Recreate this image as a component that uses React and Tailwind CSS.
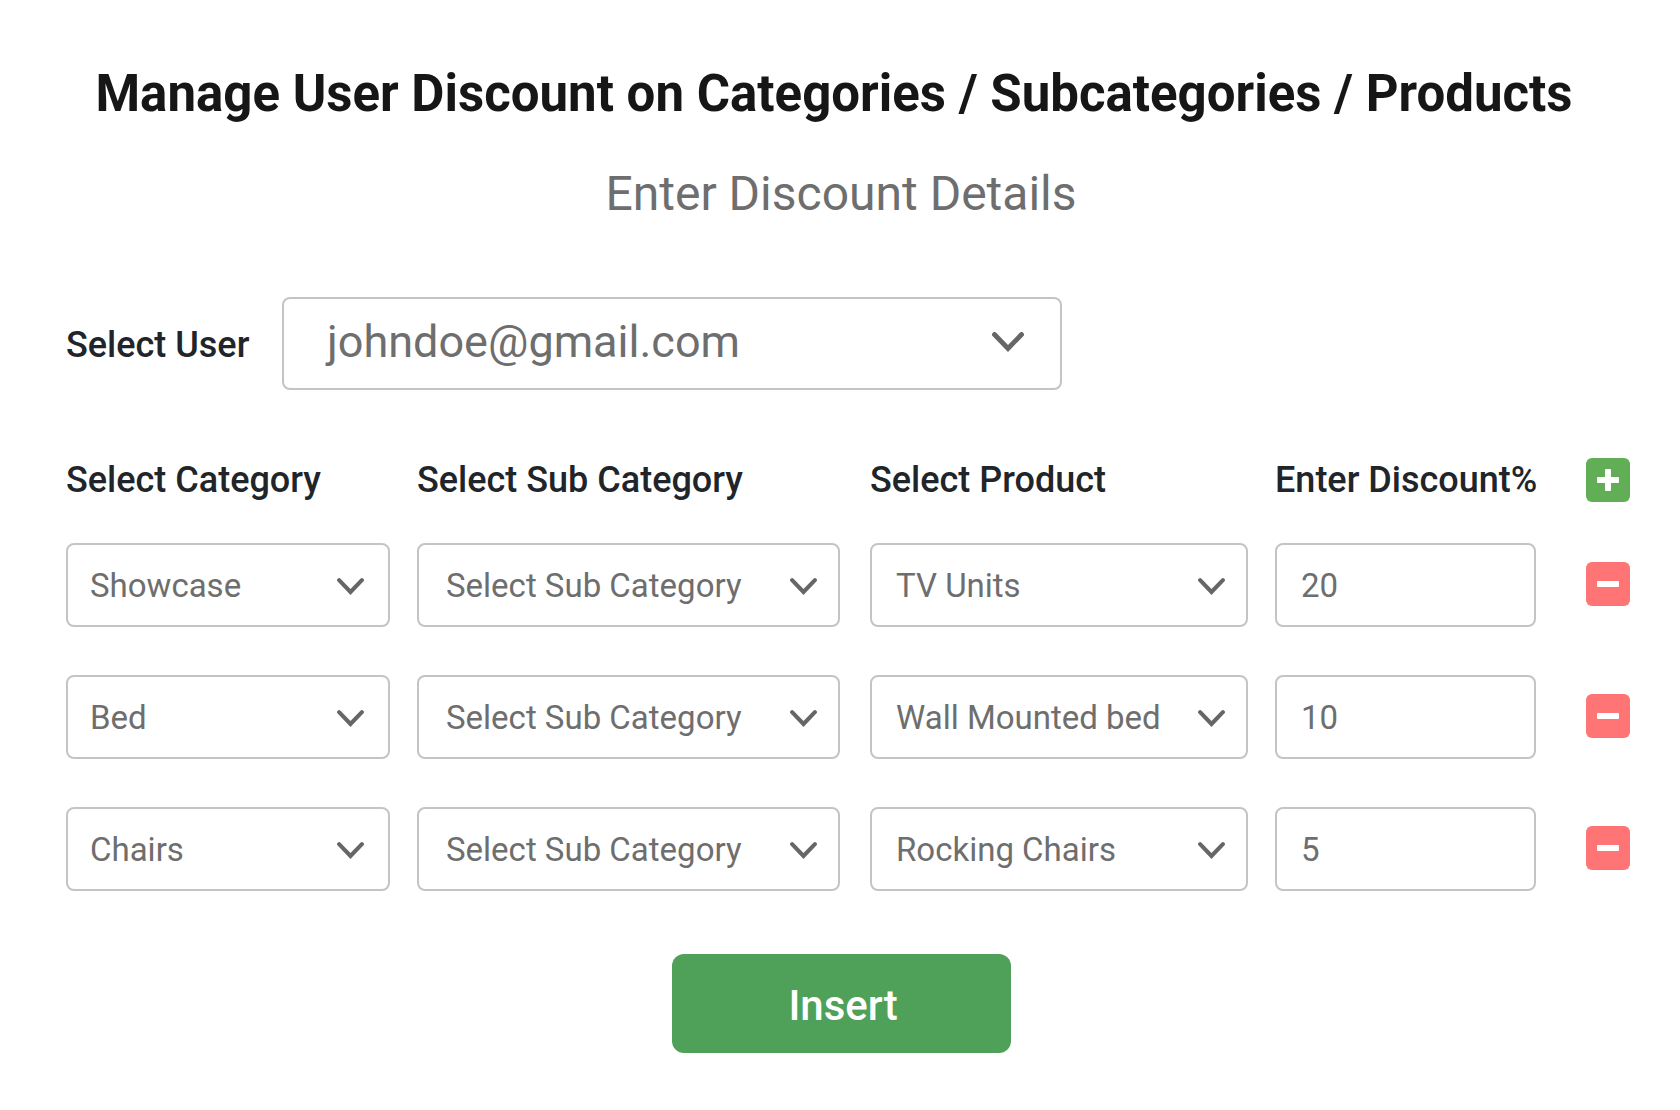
const rows = [
  { category: 'Showcase', product: 'TV Units', discount: '20' },
  { category: 'Bed', product: 'Wall Mounted bed', discount: '10' },
  { category: 'Chairs', product: 'Rocking Chairs', discount: '5' },
];

const Chevron = ({ className }) => (
  <svg viewBox="0 0 32 20" className={className} fill="none" stroke="#666666" strokeWidth="4.8" strokeLinecap="round" strokeLinejoin="miter">
    <path d="M2.5 2.5 L16 16.5 L29.5 2.5" />
  </svg>
);

const SelectBox = ({ value, className }) => (
  <div className={`flex h-[84px] shrink-0 items-center justify-between rounded-lg border-2 border-[#c4c4c4] bg-white pt-[3px] text-[33px] text-[#6e6e6e] ${className}`}>
    <span className="pb-[2px] whitespace-nowrap">{value}</span>
    <Chevron className="h-[17px] w-[27px]" />
  </div>
);

const IconButton = ({ color, plus }) => (
  <button className={`flex h-[44px] w-[44px] shrink-0 items-center justify-center rounded-md ${color}`}>
    <svg viewBox="0 0 22 22" className="h-[22px] w-[22px]" fill="#ffffff">
      <rect x="0" y="8" width="22" height="6" rx="1" />
      {plus && <rect x="8" y="0" width="6" height="22" rx="1" />}
    </svg>
  </button>
);

export default function App() {
  return (
    <div className="min-h-[1110px] bg-white pt-[61px] font-['Roboto',sans-serif]">
      {/* Heading */}
      <h1 className="pr-3 text-center text-[51px] leading-[66px] font-bold text-[#161616]">
        Manage User Discount on Categories / Subcategories / Products
      </h1>
      <h2 className="mt-[37px] pl-[2px] text-center text-[48px] leading-[60px] font-normal text-[#6e6e6e]">
        Enter Discount Details
      </h2>

      {/* User select */}
      <div className="mt-[73px] flex items-center pl-[66px]">
        <label className="w-[216px] pt-[2px] text-[36px] font-medium text-[#212529]">Select User</label>
        <div className="flex h-[93px] w-[780px] items-center justify-between rounded-lg border-2 border-[#c4c4c4] pr-[36px] pb-[3px] pl-[43px] text-[45px] text-[#6e6e6e]">
          <span>johndoe@gmail.com</span>
          <Chevron className="h-[20px] w-[32px]" />
        </div>
      </div>

      {/* Column labels */}
      <div className="mt-[68px] flex h-[44px] items-center pl-[66px] text-[36px] font-medium text-[#212529]">
        <label className="w-[351px]">Select Category</label>
        <label className="w-[453px]">Select Sub Category</label>
        <label className="w-[405px]">Select Product</label>
        <label className="w-[311px] whitespace-nowrap">Enter Discount%</label>
        <IconButton color="bg-[#62ae57]" plus />
      </div>

      {/* Discount rows */}
      <div className="mt-[41px] flex flex-col gap-[48px] pl-[66px]">
        {rows.map((row) => (
          <div key={row.category} className="flex items-center">
            <SelectBox value={row.category} className="w-[324px] pr-[24px] pl-[22px]" />
            <SelectBox value="Select Sub Category" className="ml-[27px] w-[423px] pr-[21px] pl-[27px]" />
            <SelectBox value={row.product} className="ml-[30px] w-[377.5px] pr-[21px] pl-[24px]" />
            <div className="ml-[27.5px] flex h-[84px] w-[261px] items-center rounded-lg border-2 border-[#c4c4c4] pt-[1px] pl-[24px] text-[33px] text-[#6e6e6e]">
              {row.discount}
            </div>
            <div className="ml-[50px] -translate-y-[1px]">
              <IconButton color="bg-[#ff7474]" />
            </div>
          </div>
        ))}
      </div>

      {/* Submit */}
      <div className="mt-[63px] flex justify-center pl-[2px]">
        <button className="h-[99px] w-[339px] rounded-xl bg-[#4fa15a] pt-[4px] pl-[4px] text-[42px] font-medium text-white">
          Insert
        </button>
      </div>
    </div>
  );
}
